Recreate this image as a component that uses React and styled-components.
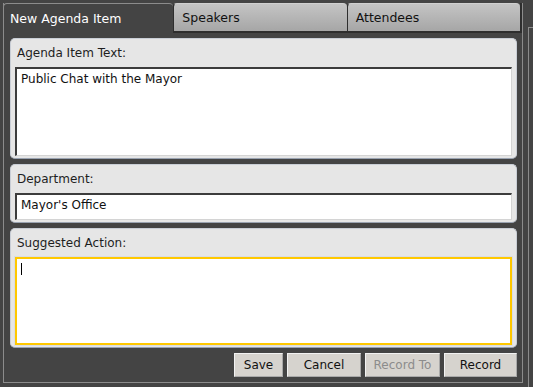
import React from 'react';
import styled, { createGlobalStyle } from 'styled-components';

const GlobalStyle = createGlobalStyle`
  html, body {
    margin: 0;
    padding: 0;
    background: #444444;
  }
  body {
    font-family: 'DejaVu Sans', Verdana, sans-serif;
  }
`;

const Screen = styled.div`
  width: 533px;
  height: 387px;
  display: flex;
  padding-top: 3px;
  box-sizing: border-box;
  overflow: hidden;
  background: #444444;
`;

const Window = styled.div`
  margin-left: 3px;
  width: 520px;
  height: 380px;
  box-sizing: border-box;
  border-left: 1px solid #8c8c8c;
  border-right: 1px solid #8c8c8c;
  border-bottom: 1px solid #8c8c8c;
  display: flex;
  flex-direction: column;
`;

const SideStrip = styled.div`
  margin-left: 5px;
  margin-top: 24px;
  flex: 1;
  border-left: 1px solid #8c8c8c;
  border-top: 1px solid #8c8c8c;
`;

const TabRow = styled.div`
  display: flex;
  height: 30px;
  margin-left: -1px;
`;

const Tab = styled.div`
  box-sizing: border-box;
  width: ${(p) => p.width}px;
  height: 30px;
  display: flex;
  align-items: center;
  padding-left: ${(p) => (p.active ? 6 : 8)}px;
  font-size: 12.5px;
  color: ${(p) => (p.active ? '#ffffff' : '#111111')};
  background: ${(p) => (p.active ? '#444444' : 'linear-gradient(#c4c4c4, #a6a6a6)')};
  border-top: 1px solid ${(p) => (p.active ? '#8c8c8c' : '#d0d0d0')};
  border-left: 1px solid ${(p) => (p.active ? '#8c8c8c' : '#2e2e2e')};
  border-bottom: ${(p) => (p.active ? 'none' : '2px solid #2e2e2e')};
  border-radius: 4px 4px 0 0;
`;

const TabShadow = styled.div`
  width: 2px;
  height: 30px;
  background: #2e2e2e;
`;

const Body = styled.div`
  flex: 1;
  display: flex;
  flex-direction: column;
  gap: 5px;
  padding: 5px 5px 0 6px;
`;

const Panel = styled.div`
  background: #e6e6e6;
  border: 1px solid #c9ced6;
  border-bottom-color: #9aa3b1;
  border-radius: 5px;
  padding: 0 4px 2px;
  display: flex;
  flex-direction: column;
`;

const Label = styled.div`
  height: 28px;
  display: flex;
  align-items: center;
  padding-left: 2px;
  font-size: 12px;
  color: #1e1e1e;
`;

const Field = styled.div`
  box-sizing: border-box;
  height: ${(p) => p.h}px;
  background: #ffffff;
  font-size: 12px;
  color: #111111;
  padding: 3px 4px;
  border-top: 2px solid #3c3c3c;
  border-left: 2px solid #3c3c3c;
  border-right: 1px solid #d4d4d4;
  border-bottom: 1px solid #d4d4d4;
  &.focused {
    border: 2px solid #ffc800;
    outline: 1px solid #dadde3;
  }
`;

const Caret = styled.span`
  display: inline-block;
  width: 1px;
  height: 12px;
  background: #000;
  margin-top: 1px;
`;

const ButtonRow = styled.div`
  display: flex;
  justify-content: flex-end;
  gap: 4px;
`;

const Button = styled.div`
  box-sizing: border-box;
  width: ${(p) => p.width}px;
  height: 24px;
  display: flex;
  align-items: center;
  justify-content: center;
  font-size: 12px;
  color: ${(p) => (p.disabled ? '#8c8c8c' : '#111111')};
  background: #d6d3ce;
  border-top: 1px solid #f2f2f2;
  border-left: 1px solid #f2f2f2;
  border-right: 1px solid #a9a9a9;
  border-bottom: 1px solid #a9a9a9;
`;

export default function App() {
  return (
    <>
      <GlobalStyle />
      <Screen>
        <Window>
          <TabRow>
            <Tab active width={171}>New Agenda Item</Tab>
            <Tab width={174}>Speakers</Tab>
            <Tab width={174}>Attendees</Tab>
            <TabShadow />
          </TabRow>
          <Body>
            <Panel>
              <Label>Agenda Item Text:</Label>
              <Field h={89}>Public Chat with the Mayor</Field>
            </Panel>
            <Panel>
              <Label>Department:</Label>
              <Field h={27}>Mayor's Office</Field>
            </Panel>
            <Panel>
              <Label>Suggested Action:</Label>
              <Field h={88} className="focused">
                <Caret />
              </Field>
            </Panel>
            <ButtonRow>
              <Button width={49}>Save</Button>
              <Button width={74}>Cancel</Button>
              <Button width={75} disabled>
                Record To
              </Button>
              <Button width={73}>Record</Button>
            </ButtonRow>
          </Body>
        </Window>
        <SideStrip />
      </Screen>
    </>
  );
}
